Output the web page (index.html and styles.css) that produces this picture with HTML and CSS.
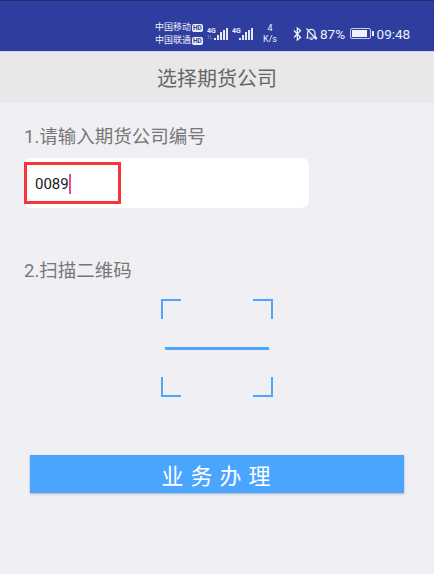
FILE: index.html
```html
<!DOCTYPE html>
<html lang="zh">
<head>
<meta charset="utf-8">
<title>选择期货公司</title>
<link rel="stylesheet" href="styles.css">
</head>
<body>
<div class="status">
  <div class="carriers">
    <div class="carrier">中国移动<span class="hd">HD</span></div>
    <div class="carrier">中国联通<span class="hd">HD</span></div>
  </div>
  <svg class="signal" width="22" height="14" viewBox="0 0 22 14">
    <text x="0" y="6" class="tiny">4G</text>
    <text x="0" y="12" class="tiny dim">1L</text>
    <path d="M7 13h2v-2H7zM10 13h2V8h-2zM13 13h2V5h-2zM16 13h2V3h-2zM19 13h2V1h-2z" fill="#e6e8f5"/>
  </svg>
  <svg class="signal second" width="22" height="14" viewBox="0 0 22 14">
    <text x="0" y="6" class="tiny">4G</text>
    <path d="M7 13h2v-2H7zM10 13h2V8h-2zM13 13h2V5h-2zM16 13h2V3h-2zM19 13h2V1h-2z" fill="#e6e8f5"/>
  </svg>
  <div class="speed"><span>4</span><span>K/s</span></div>
  <svg class="bt" width="9" height="14" viewBox="0 0 9 14"><path d="M1 3.5l6.5 7L4.3 13V1l3.2 2.5L1 10.500" fill="none" stroke="#eef0fa" stroke-width="1.300"/></svg>
  <svg class="bell" width="13" height="14" viewBox="0 0 13 14"><path d="M2 11h9.500l-1.500-2V6a3.700 3.700 0 0 0-7.400 0v3zM5.300 12.500h2.400M1.500 1.500l10 11" fill="none" stroke="#eef0fa" stroke-width="1.200"/></svg>
  <span class="pct">87%</span>
  <div class="battery"><div class="level"></div></div>
  <div class="nub"></div>
  <span class="time">09:48</span>
</div>
<header class="title">选择期货公司</header>
<main class="content">
  <div class="label">1.请输入期货公司编号</div>
  <div class="field">
    <span class="value">0089</span><span class="caret"></span>
    <div class="highlight"></div>
  </div>
  <div class="label second-label">2.扫描二维码</div>
  <div class="scanner">
    <span class="corner tl"></span>
    <span class="corner tr"></span>
    <span class="scanline"></span>
    <span class="corner bl"></span>
    <span class="corner br"></span>
  </div>
  <button class="action">业务办理</button>
</main>
</body>
</html>
```
FILE: styles.css
```css
* { box-sizing: border-box; }
html, body { margin: 0; height: 100%; }
body {
  background: #f0eff4;
  font-family: Roboto, "Noto Sans CJK SC", sans-serif;
  overflow: hidden;
}
.status {
  height: 52px;
  background: #2f3e9e;
  border-top: 1px solid #1f2a70;
  border-bottom: 1px solid #d5d6e0;
  display: flex;
  align-items: center;
  padding: 15px 0 0 155px;
  color: #eef0fa;
}
.carriers { width: 50px; font-size: 9px; line-height: 13px; margin-top: 1px; }
.carrier { display: flex; align-items: center; white-space: nowrap; }
.hd {
  margin-left: 1px;
  font-size: 6.500px;
  line-height: 8px;
  font-weight: 700;
  background: #eef0fa;
  color: #2f3e9e;
  border-radius: 2px;
  padding: 0 1px;
}
.signal { margin-left: 2px; }
.second { margin-left: 3px; }
.tiny { font-size: 7px; font-weight: 700; fill: #e6e8f5; font-family: Roboto, sans-serif; }
.dim { fill: #8b93cc; font-weight: 400; font-size: 5px; }
.speed {
  width: 24px;
  margin-left: 4px;
  display: flex;
  flex-direction: column;
  align-items: center;
  font-size: 9px;
  line-height: 11px;
}
.bt { margin-left: 11px; }
.bell { margin-left: 3px; }
.pct { margin-left: 2px; font-size: 13.500px; }
.battery {
  margin-left: 5px;
  width: 21px;
  height: 11px;
  border: 1px solid #c9cdea;
  border-radius: 2px;
  padding: 1px;
}
.level { width: 85%; height: 100%; background: #eef0fa; }
.nub { width: 1.500px; height: 5px; background: #eef0fa; margin-left: 1px; }
.time { margin-left: 3px; font-size: 13.500px; }
.title {
  height: 51px;
  background: #e8e8e8;
  color: #666;
  font-size: 20px;
  display: flex;
  align-items: center;
  justify-content: center;
}
.content { padding: 23px 25px 0 24px; }
.label { font-size: 18.500px; line-height: 22px; color: #777; }
.field {
  position: relative;
  margin-top: 10px;
  width: 285px;
  height: 50px;
  background: #fff;
  border-radius: 6px;
  box-shadow: 0 0 1px #d8d8de;
  display: flex;
  align-items: center;
  padding: 2px 0 0 11px;
  font-size: 15px;
  color: #1a1a1a;
}
.caret { width: 2px; height: 20px; background: #ee4a88; }
.highlight {
  position: absolute;
  left: 0;
  top: 4px;
  width: 97px;
  height: 42px;
  border: 3px solid #f5353a;
}
.second-label { margin-top: 52px; }
.scanner {
  margin: 17px 0 0 137px;
  width: 112px;
  height: 98px;
  display: grid;
  grid-template-columns: 20px 1fr 20px;
  grid-template-rows: 20px 1fr 20px;
}
.corner { border: 0 solid #4ea5fb; }
.tl { grid-area: 1 / 1; border-width: 2px 0 0 2px; }
.tr { grid-area: 1 / 3; border-width: 2px 2px 0 0; }
.bl { grid-area: 3 / 1; border-width: 0 0 2px 2px; }
.br { grid-area: 3 / 3; border-width: 0 2px 2px 0; }
.scanline {
  grid-area: 2 / 1 / 2 / 4;
  align-self: center;
  justify-self: center;
  width: 104px;
  height: 3px;
  background: #4ea5fb;
}
.action {
  display: block;
  margin: 58px 0 0 6px;
  width: 374px;
  height: 38px;
  border: 0;
  border-radius: 0;
  background: #4aa5ff;
  box-shadow: 0 1px 2px rgba(70, 90, 130, .45);
  color: #fff;
  font-family: inherit;
  font-size: 22px;
  letter-spacing: 7px;
  text-indent: 5px;
  padding: 0;
}
```
